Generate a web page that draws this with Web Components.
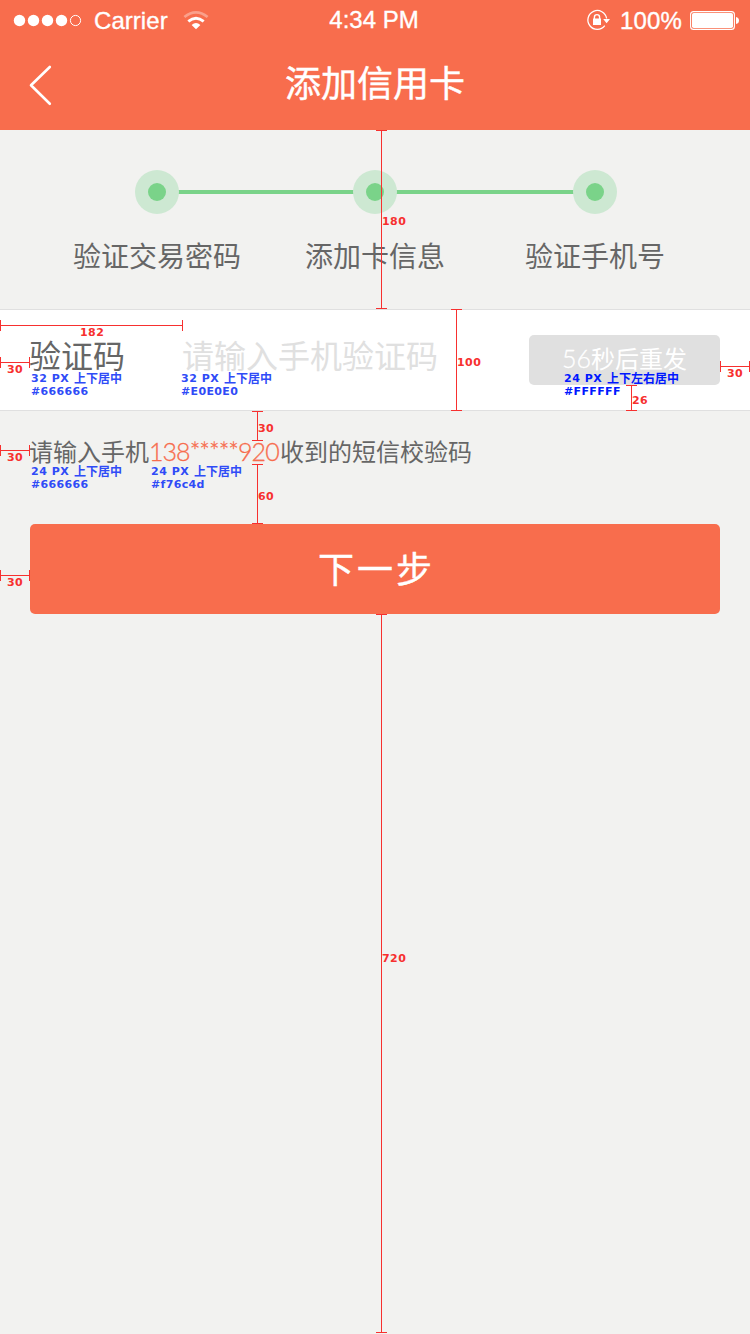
<!DOCTYPE html>
<html lang="zh-CN">
<head>
<meta charset="utf-8">
<title>添加信用卡</title>
<style>
html,body{margin:0;padding:0}
body{width:750px;height:1334px;overflow:hidden;background:#f2f2f0;font-family:"Liberation Sans","Noto Sans CJK SC",sans-serif;color:#666}
</style>
</head>
<body>
<card-screen></card-screen>
<script>
const define = (name, html, setup) => customElements.define(name, class extends HTMLElement {
  connectedCallback() {
    if (this.shadowRoot) return;
    const t = document.createElement('template');
    t.innerHTML = html;
    this.attachShadow({mode: 'open'}).append(t.content.cloneNode(true));
    if (setup) setup(this, this.shadowRoot);
  }
});

define('status-bar', `
<style>
:host{display:flex;height:40px;color:#fff;font-size:24px;line-height:40px;white-space:nowrap;justify-content:space-between;position:relative}
.side{display:flex}
svg{display:block;flex:none}
.carrier{margin-left:11px;-webkit-text-stroke:.35px;letter-spacing:.05px;line-height:42px}
.time{position:absolute;left:0;right:0;text-align:center;-webkit-text-stroke:.35px;letter-spacing:0;padding-right:2px}
.pct{width:62px;margin:0 8px 0 10px;-webkit-text-stroke:.35px;line-height:42px;letter-spacing:.15px}
</style>
<div class="side">
<svg width="83" height="40" fill="#fff"><circle cx="19.5" cy="20.5" r="5.7"/><circle cx="33.5" cy="20.5" r="5.7"/><circle cx="47.5" cy="20.5" r="5.7"/><circle cx="61.5" cy="20.5" r="5.7"/><circle cx="75.5" cy="20.5" r="5.1" fill="none" stroke="#fff"/></svg>
<span class="carrier">Carrier</span>
<svg style="margin-left:14px" width="28" height="40" viewBox="181 0 28 40" fill="none" stroke="#fff" stroke-width="2.8"><path opacity=".35" d="M183.4 17Q195 7.8 206.6 17"/><path d="M187.3 21.4Q195 15 202.7 21.4"/><path fill="#fff" stroke="none" d="M190.6 25Q195 21.2 199.4 25L195 29.2Z"/></svg>
</div>
<span class="time">4:34 PM</span>
<div class="side">
<svg width="24" height="40" viewBox="586 0 24 40" fill="none" stroke="#fff"><path stroke-width="1.3" d="M606.6 18.5A9.4 9.4 0 1 0 604.8 25.6"/><path fill="#fff" stroke="none" d="M603.2 19H610L606.6 23.2ZM593 18.5H601V25H593Z"/><path stroke-width="1.4" d="M594.4 19V17.2A2.6 2.6 0 0 1 599.6 17.2V19"/></svg>
<span class="pct">100%</span>
<svg width="60" height="40" viewBox="690 0 60 40"><rect x="690.6" y="11.6" width="43.8" height="17.8" rx="3" fill="none" stroke="#fff" stroke-width="1.1"/><rect x="692" y="13" width="41" height="15" rx="1.8" fill="#fff"/><path fill="#fff" d="M736 17Q739 17.5 739 20.5T736 24Z"/></svg>
</div>`);

define('nav-bar', `
<style>
:host{display:grid;grid-template-columns:75px 1fr 75px;height:90px;color:#fff;align-items:center}
h1{margin:0;font-size:36px;font-weight:400;-webkit-text-stroke:.4px;text-align:center;line-height:90px}
svg{display:block}
</style>
<svg width="75" height="90" viewBox="0 40 75 90" fill="none" stroke="#fff" stroke-width="2.6" stroke-linecap="round" stroke-linejoin="round"><path d="M49.8 67L31 85.3L49.8 103.8"/></svg>
<h1><slot></slot></h1>`);

define('step-track', `
<style>
:host{display:block;height:179px}
svg{display:block}
.labels{display:flex;font-size:28px;line-height:40px;padding-top:23px}
.labels span{flex:none}
</style>
<svg width="750" height="85" viewBox="0 130 750 85"><path d="M157 192H595" stroke="#7ad389" stroke-width="4"/><g fill="#cde8d2"><circle cx="157" cy="192" r="22"/><circle cx="375" cy="192" r="22"/><circle cx="595" cy="192" r="22"/></g><g fill="#7ad389"><circle cx="157" cy="192" r="9"/><circle cx="375" cy="192" r="9"/><circle cx="595" cy="192" r="9"/></g></svg>
<div class="labels"><span style="margin-left:73px">验证交易密码</span><span style="margin-left:64px">添加卡信息</span><span style="margin-left:80px">验证手机号</span></div>`);

define('code-field', `
<style>
:host{display:flex;box-sizing:border-box;height:102px;border:1px solid #e0e0e0;border-width:1px 0;background:#fff;padding:0 30px 0 29px;font-size:32px}
label,.hint{line-height:94px}
label{width:153px;flex:none}
.hint{flex:1;color:#e0e0e0}
button{font:24px/47px "Lato","Noto Sans CJK SC",sans-serif;margin:25px 0 0;padding:0 0 3px;width:191px;height:50px;border:0;border-radius:5px;background:#e0e0e0;color:#fff;text-align:center}
i{font-style:normal;font-weight:300;-webkit-text-stroke:.3px;font-size:25px}
</style>
<label>验证码</label><span class="hint">请输入手机验证码</span><button><i>56</i>秒后重发</button>`);

define('sms-note', `
<style>
:host{display:flex;height:113px;padding-left:29px;font-size:24px;line-height:84px;white-space:nowrap}
b{font-family:"Lato",sans-serif;font-size:25px;font-weight:300;-webkit-text-stroke:.3px;color:#f76c4d;width:131px;letter-spacing:-.95px;line-height:81px}
.a{width:120px}
</style>
<span class="a">请输入手机</span><b>138*****920</b><span>收到的短信校验码</span>`);

define('primary-button', `
<style>
:host{display:block;padding:0 30px}
button{display:block;width:690px;height:90px;border:0;border-radius:5px;background:#f86d4d;color:#fff;font:400 36px/87px "Noto Sans CJK SC",sans-serif;-webkit-text-stroke:.4px;letter-spacing:3px;text-indent:3px;padding:0 0 3px}
</style>
<button><slot></slot></button>`);

/* measure-line: x, y = start; len = length; dir = h|v; lx, ly = label box origin */
define('measure-line', `
<style>
:host{position:absolute;color:#f7302f;font:bold 11px/12px "DejaVu Sans",sans-serif;letter-spacing:.45px}
.l{position:absolute;box-sizing:border-box;left:0;top:0}
.l::before{content:"";position:absolute;background:#f7302f}
.h{height:11px;top:-5px}
.h{background:linear-gradient(#f7302f,#f7302f) 0 0/1px 100% no-repeat,linear-gradient(#f7302f,#f7302f) 100% 0/1px 100% no-repeat}
.h::before{left:0;right:0;top:5px;height:1px}
.v{width:11px;left:-5px}
.v{background:linear-gradient(#f7302f,#f7302f) 0 0/100% 1px no-repeat,linear-gradient(#f7302f,#f7302f) 0 100%/100% 1px no-repeat}
.v::before{top:0;bottom:0;left:5px;width:1px}
span{position:absolute;white-space:nowrap}
</style>
<div class="l"></div><span></span>`, (el, root) => {
  const g = n => +el.getAttribute(n), dir = el.getAttribute('dir');
  el.style.left = g('x') + 'px';
  el.style.top = g('y') + 'px';
  const line = root.querySelector('.l'), label = root.querySelector('span');
  line.classList.add(dir);
  line.style[dir === 'h' ? 'width' : 'height'] = g('len') + 'px';
  label.textContent = el.getAttribute('label');
  label.style.left = g('lx') - g('x') + 'px';
  label.style.top = g('ly') + 1 - g('y') + 'px';
});

define('spec-note', `
<style>
:host{position:absolute;color:#2f4bf7;font:bold 11px/13px "DejaVu Sans","Noto Sans CJK SC",sans-serif;white-space:nowrap}
div{display:flex;height:13px}
.s{width:43px;letter-spacing:.5px}
.c{font:bold 12px/11px "Noto Sans CJK SC",sans-serif}
.hex{letter-spacing:.35px}
</style>
<div><span class="s"></span><span class="c"></span></div><div class="hex"><slot></slot></div>`, (el, root) => {
  root.querySelector('.s').textContent = el.getAttribute('size');
  root.querySelector('.c').textContent = el.getAttribute('align');
});

define('card-screen', `
<style>
:host{display:block;position:relative;width:750px;height:1334px;background:#f2f2f0;overflow:hidden}
header{background:#f86d4d;height:130px}
</style>
<header><status-bar></status-bar><nav-bar>添加信用卡</nav-bar></header>
<step-track></step-track>
<code-field></code-field>
<sms-note></sms-note>
<primary-button>下一步</primary-button>
<measure-line dir="v" x="381" y="130" len="179" label="180" lx="382" ly="215"></measure-line>
<measure-line dir="v" x="456" y="309" len="102" label="100" lx="457" ly="356"></measure-line>
<measure-line dir="v" x="257" y="411" len="30" label="30" lx="258" ly="422"></measure-line>
<measure-line dir="v" x="257" y="464" len="60" label="60" lx="258" ly="490"></measure-line>
<measure-line dir="v" x="631" y="385" len="26" label="26" lx="632" ly="394"></measure-line>
<measure-line dir="v" x="381" y="614" len="719" label="720" lx="382" ly="952"></measure-line>
<measure-line dir="h" x="0" y="325" len="183" label="182" lx="80" ly="326"></measure-line>
<measure-line dir="h" x="0" y="362" len="30" label="30" lx="7" ly="363"></measure-line>
<measure-line dir="h" x="0" y="450" len="30" label="30" lx="7" ly="451"></measure-line>
<measure-line dir="h" x="0" y="575" len="30" label="30" lx="7" ly="576"></measure-line>
<measure-line dir="h" x="720" y="366" len="30" label="30" lx="727" ly="367"></measure-line>
<spec-note size="32 PX" align="上下居中" style="left:31px;top:372px">#666666</spec-note>
<spec-note size="32 PX" align="上下居中" style="left:181px;top:372px">#E0E0E0</spec-note>
<spec-note size="24 PX" align="上下左右居中" style="left:564px;top:372px;color:#0018ff">#FFFFFF</spec-note>
<spec-note size="24 PX" align="上下居中" style="left:31px;top:465px">#666666</spec-note>
<spec-note size="24 PX" align="上下居中" style="left:151px;top:465px">#f76c4d</spec-note>`);
</script>
</body>
</html>
